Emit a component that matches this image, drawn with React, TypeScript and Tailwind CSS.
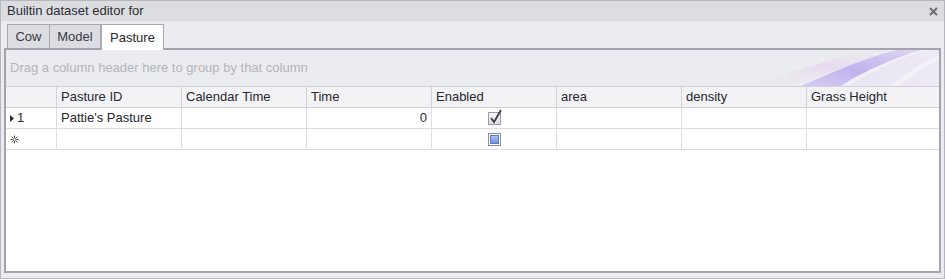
import React from "react";

const font = { fontFamily: '"Liberation Sans", Arial, sans-serif' };

const cols = [
  { name: "Pasture ID", w: "w-[125px]" },
  { name: "Calendar Time", w: "w-[125px]" },
  { name: "Time", w: "w-[125px]" },
  { name: "Enabled", w: "w-[125px]" },
  { name: "area", w: "w-[125px]" },
  { name: "density", w: "w-[125px]" },
  { name: "Grass Height", w: "flex-1" },
];

function Swoosh() {
  return (
    <svg className="absolute right-0 top-0" width="200" height="36" viewBox="0 0 200 36">
      <defs>
        <linearGradient id="g1" x1="0" y1="1" x2="1" y2="0">
          <stop offset="0" stopColor="#ebecef" stopOpacity="0" />
          <stop offset="0.55" stopColor="#e6d6ee" stopOpacity="0.9" />
          <stop offset="1" stopColor="#ebecef" stopOpacity="0" />
        </linearGradient>
        <linearGradient id="g2" x1="0" y1="1" x2="1" y2="0">
          <stop offset="0" stopColor="#d3c9f1" />
          <stop offset="0.45" stopColor="#bcadeb" />
          <stop offset="1" stopColor="#ddd5f3" />
        </linearGradient>
        <linearGradient id="g4" x1="0" y1="0" x2="1" y2="0">
          <stop offset="0" stopColor="#e4ddf3" />
          <stop offset="1" stopColor="#efeaf6" />
        </linearGradient>
      </defs>
      <path d="M5 36 C45 26 85 12 125 0 L160 0 C120 12 80 26 50 36 Z" fill="url(#g1)" />
      <path d="M62 36 C95 22 125 8 158 0 L200 0 L200 36 Z" fill="url(#g4)" opacity="0.7" />
      <path d="M62 36 C95 22 125 8 158 0 L182 0 C150 10 120 24 102 36 Z" fill="url(#g2)" opacity="0.9" />
      <path d="M102 36 C120 24 150 10 182 0 L186 0 C155 11 127 24 110 36 Z" fill="#f4f1fa" opacity="0.8" />
      <path d="M150 36 C168 22 184 12 200 6 L200 10 C186 16 172 26 160 36 Z" fill="#f6f4fa" opacity="0.7" />
    </svg>
  );
}

function CheckedBox() {
  return (
    <div className="relative w-[13px] h-[13px] border border-[#9a9aa6] bg-gradient-to-b from-[#f6f6f8] to-[#dedee4]">
      <svg className="absolute -top-[4px] left-[0px]" width="14" height="16" viewBox="0 0 14 16">
        <path d="M2 9 L5 13 L12 1" fill="none" stroke="#404048" strokeWidth="1.8" />
      </svg>
    </div>
  );
}

function EmptyBox() {
  return (
    <div className="w-[13px] h-[13px] border border-[#8e8ea0] bg-white p-[1px]">
      <div className="w-full h-full bg-gradient-to-b from-[#a9c0ec] to-[#6f93d9] border border-[#5a7bc4]" />
    </div>
  );
}

function NewRowGlyph() {
  return (
    <svg width="9" height="9" viewBox="0 0 9 9">
      <path d="M4.5 0.5 V8.5 M0.5 4.5 H8.5 M1.7 1.7 L7.3 7.3 M7.3 1.7 L1.7 7.3" stroke="#50505a" strokeWidth="1" />
      <circle cx="4.5" cy="4.5" r="1.2" fill="#ffffff" />
    </svg>
  );
}

export default function App() {
  return (
    <div
      style={font}
      className="w-[945px] h-[279px] border border-[#b7b7bf] bg-[#ebecef] flex flex-col text-[13px] text-[#27272f]"
    >
      <div className="h-[21px] bg-[#dcdde1] border-b border-[#e6e6ea] flex items-center justify-between pl-[6px] pr-[6px]">
        <span className="text-[#2c2c34]">Builtin dataset editor for</span>
        <svg width="9" height="9" viewBox="0 0 9 9">
          <path d="M1 1 L8 8 M8 1 L1 8" stroke="#6e6e78" strokeWidth="2" />
        </svg>
      </div>
      <div className="h-[26px] flex items-end pl-[6px]">
        <div className="h-[24px] w-[43px] border border-b-0 border-[#a8a8b2] bg-[#dcdde2] flex items-center justify-center text-[#3a3a44]">
          Cow
        </div>
        <div className="h-[24px] w-[51px] border border-b-0 border-l-0 border-[#a8a8b2] bg-[#dcdde2] flex items-center justify-center text-[#3a3a44]">
          Model
        </div>
        <div className="h-[26px] w-[63px] border border-b-0 border-[#a8a8b2] bg-white flex items-center justify-center text-[#27272f] -mb-[2px] relative z-10">
          Pasture
        </div>
      </div>
      <div className="flex-1 mx-[3px] mb-[5px] border-2 border-[#a4a4ae] bg-white flex flex-col">
        <div className="relative h-[36px] bg-[#ebecef] flex items-center pl-[4px] overflow-hidden">
          <span className="text-[#b4b4bc] relative z-10">Drag a column header here to group by that column</span>
          <Swoosh />
        </div>
        <div className="h-[22px] flex bg-[#f3f3f5] border-y border-[#d2d2da]">
          <div className="w-[51px] border-r border-[#d2d2da]" />
          {cols.map((c, i) => (
            <div
              key={c.name}
              className={`${c.w} ${i < cols.length - 1 ? "border-r" : ""} border-[#d2d2da] flex items-center pl-[4px]`}
            >
              {c.name}
            </div>
          ))}
        </div>
        <div className="h-[21px] flex border-b border-[#dcdce2]">
          <div className="w-[51px] border-r border-[#dcdce2] flex items-center pl-[4px] gap-[3px]">
            <svg width="4" height="7" viewBox="0 0 4 7">
              <path d="M0 0 L4 3.5 L0 7 Z" fill="#2a2a34" />
            </svg>
            <span>1</span>
          </div>
          <div className="w-[125px] border-r border-[#dcdce2] flex items-center pl-[4px]">Pattie's Pasture</div>
          <div className="w-[125px] border-r border-[#dcdce2]" />
          <div className="w-[125px] border-r border-[#dcdce2] flex items-center justify-end pr-[4px]">0</div>
          <div className="w-[125px] border-r border-[#dcdce2] flex items-center justify-center">
            <CheckedBox />
          </div>
          <div className="w-[125px] border-r border-[#dcdce2]" />
          <div className="w-[125px] border-r border-[#dcdce2]" />
          <div className="flex-1" />
        </div>
        <div className="h-[21px] flex border-b border-[#dcdce2]">
          <div className="w-[51px] border-r border-[#dcdce2] flex items-center pl-[4px]">
            <NewRowGlyph />
          </div>
          <div className="w-[125px] border-r border-[#dcdce2]" />
          <div className="w-[125px] border-r border-[#dcdce2]" />
          <div className="w-[125px] border-r border-[#dcdce2]" />
          <div className="w-[125px] border-r border-[#dcdce2] flex items-center justify-center">
            <EmptyBox />
          </div>
          <div className="w-[125px] border-r border-[#dcdce2]" />
          <div className="w-[125px] border-r border-[#dcdce2]" />
          <div className="flex-1" />
        </div>
      </div>
    </div>
  );
}
